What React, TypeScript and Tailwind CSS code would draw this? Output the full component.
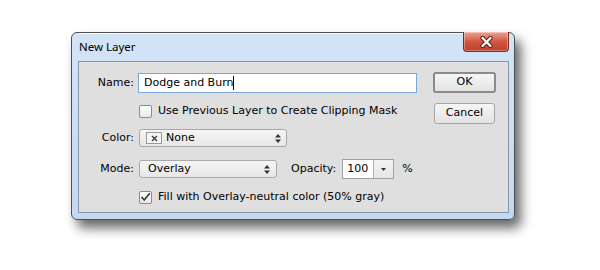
import React from "react";

const ui = { fontFamily: '"DejaVu Sans", Verdana, sans-serif' };

function SpinArrows() {
  return (
    <svg width="6" height="9" viewBox="0 0 6 9" className="shrink-0">
      <path d="M3 0 L6 3.5 L0 3.5 Z" fill="#333" />
      <path d="M3 9 L6 5.5 L0 5.5 Z" fill="#333" />
    </svg>
  );
}

function Checkbox({ checked }: { checked?: boolean }) {
  return (
    <div className="w-[13px] h-[13px] shrink-0 rounded-[2px] border border-[#8c8c8c] bg-gradient-to-b from-[#ffffff] to-[#e9e9e9] flex items-center justify-center">
      {checked && (
        <svg width="11" height="10" viewBox="0 0 11 10">
          <path d="M1.5 5 L4.2 8 L9.8 1.2" fill="none" stroke="#3a3a3a" strokeWidth="1.7" />
        </svg>
      )}
    </div>
  );
}

function Row({ label, children, className = "" }: { label?: string; children: React.ReactNode; className?: string }) {
  return (
    <div className={`flex items-center h-[20px] gap-[4px] ${className}`}>
      <div className="w-[55px] shrink-0 text-right">{label}</div>
      {children}
    </div>
  );
}

function Button({ children, isDefault }: { children: React.ReactNode; isDefault?: boolean }) {
  return (
    <div
      className={`h-[21px] flex items-center justify-center rounded-[3px] bg-gradient-to-b from-[#f6f6f6] to-[#e3e3e3] ${
        isDefault ? "w-[63px] border-2 border-[#8a8a8a]" : "w-[61px] mx-px border border-[#a6a6a6]"
      }`}
    >
      {children}
    </div>
  );
}

export default function App() {
  return (
    <div className="w-[600px] h-[270px] bg-white pl-[71px] pt-[32px] text-black text-[11px]" style={ui}>
      <div className="w-[444px] h-[188px] rounded-[6px] border border-[#505050] bg-gradient-to-b from-[#d3e4f7] to-[#c2d9f1] shadow-[6px_8px_12px_rgba(0,0,0,0.6)] pl-[6px] pr-[5px] flex flex-col">
        <div className="h-[28px] flex items-start justify-between pl-[1px] shadow-[inset_0_1px_0_rgba(255,255,255,0.8)]">
          <span className="self-center text-[11.5px] -mt-px" style={{ fontFamily: '"Noto Sans", sans-serif' }}>
            New Layer
          </span>
          <div className="-mt-px w-[46px] h-[20px] rounded-b-[4px] border border-[#7a2a1e] border-t-0 bg-gradient-to-b from-[#e9a594] via-[#cf5843] to-[#c23c28] flex items-center justify-center shadow-[inset_0_0_0_1px_rgba(255,255,255,0.35)]">
            <svg width="15" height="12" viewBox="0 0 15 12">
              <path d="M3.5 2 L11.5 10 M11.5 2 L3.5 10" stroke="#5a1a10" strokeWidth="4.2" strokeLinecap="round" />
              <path d="M3.5 2 L11.5 10 M11.5 2 L3.5 10" stroke="#ffffff" strokeWidth="2.4" strokeLinecap="round" />
            </svg>
          </div>
        </div>

        <div className="h-[152px] border border-[#8795a6] bg-[#dfdfdf] flex pt-[10px]">
          <div className="flex-1 flex flex-col mt-px">
            <Row label="Name:">
              <div className="w-[279px] h-[20px] border border-[#7aa7dc] bg-white flex items-center pl-[5px]">
                <span>Dodge and Burn</span>
                <span className="w-px h-[14px] bg-black" />
              </div>
            </Row>

            <Row className="mt-[8px]">
              <div className="ml-px flex items-center gap-[6px]">
                <Checkbox />
                <span>Use Previous Layer to Create Clipping Mask</span>
              </div>
            </Row>

            <Row label="Color:" className="mt-[7px]">
              <div className="ml-px w-[148px] h-[18px] rounded-[3px] border border-[#a9a9a9] bg-gradient-to-b from-[#f5f5f5] to-[#e7e7e7] flex items-center pl-[6px] pr-[5px]">
                <div className="w-[16px] h-[12px] border border-[#9a9a9a] bg-[#f4f4f4] flex items-center justify-center">
                  <svg width="7" height="7" viewBox="0 0 7 7">
                    <path d="M1 1 L6 6 M6 1 L1 6" stroke="#3c3c3c" strokeWidth="1.4" />
                  </svg>
                </div>
                <span className="ml-[4px] flex-1">None</span>
                <SpinArrows />
              </div>
            </Row>

            <Row label="Mode:" className="mt-[11px]">
              <div className="ml-px w-[138px] h-[18px] rounded-[3px] border border-[#a9a9a9] bg-gradient-to-b from-[#f5f5f5] to-[#e7e7e7] flex items-center pl-[8px] pr-[6px]">
                <span className="flex-1">Overlay</span>
                <SpinArrows />
              </div>
              <span className="ml-[10px]">Opacity:</span>
              <div className="ml-[2px] w-[52px] h-[20px] border border-[#a0a0a0] bg-white flex">
                <div className="w-[30px] flex items-center pl-[4px]">100</div>
                <div className="flex-1 border-l border-[#b0b0b0] bg-gradient-to-b from-[#f4f4f4] to-[#e6e6e6] flex items-center justify-center">
                  <svg width="5" height="3" viewBox="0 0 5 3">
                    <path d="M0 0 L5 0 L2.5 3 Z" fill="#333" />
                  </svg>
                </div>
              </div>
              <span className="ml-[4px]">%</span>
            </Row>

            <Row className="mt-[8px]">
              <div className="ml-px flex items-center gap-[6px]">
                <Checkbox checked />
                <span>Fill with Overlay-neutral color (50% gray)</span>
              </div>
            </Row>
          </div>

          <div className="w-[63px] mr-[12px] flex flex-col gap-[10px]">
            <Button isDefault>OK</Button>
            <Button>Cancel</Button>
          </div>
        </div>
      </div>
    </div>
  );
}
